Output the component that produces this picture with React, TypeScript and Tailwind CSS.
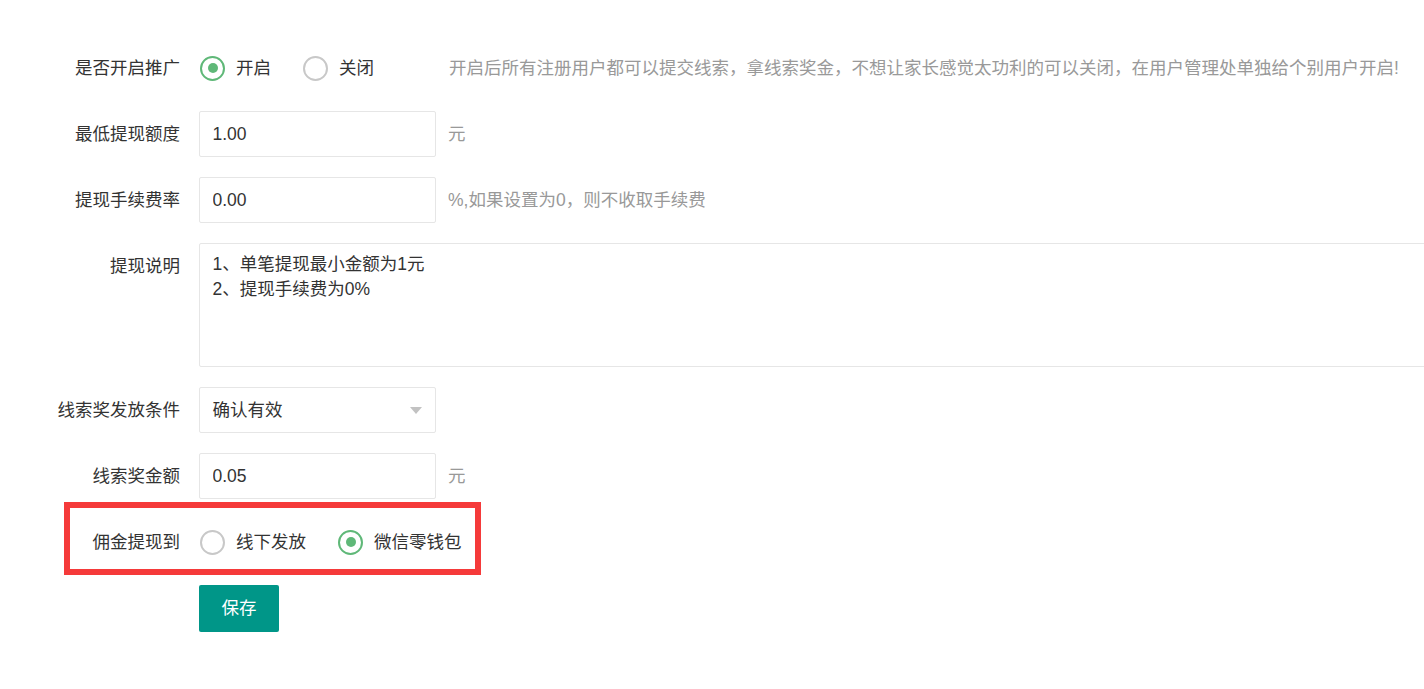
import React from "react";

const font = "font-['Liberation_Sans','Noto_Sans_CJK_SC',sans-serif]";

const Radio = ({ label, checked }: { label: string; checked?: boolean }) => (
  <div className="flex items-center mr-[31px] cursor-pointer">
    <span
      className={`ml-px w-[25px] h-[25px] rounded-full border-[2.5px] flex items-center justify-center ${
        checked ? "border-[#5FB878]" : "border-[#c8c8c8]"
      }`}
    >
      {checked && <span className="w-[10px] h-[10px] rounded-full bg-[#5FB878]" />}
    </span>
    <span className="ml-[11px]">{label}</span>
  </div>
);

const Label = ({ text }: { text: string }) => (
  <label className="w-[138px] shrink-0 flex justify-end whitespace-nowrap pr-[19px] pt-[10.5px] leading-[25px] h-fit text-[#333]">
    {text}
  </label>
);

const TextInput = ({ value }: { value: string }) => (
  <input
    defaultValue={value}
    className="h-[46px] w-[237px] border border-[#e6e6e6] rounded-[2px] px-[12.5px] text-[#333] outline-none bg-white"
  />
);

const Hint = ({ text }: { text: string }) => (
  <span className="ml-[12px] leading-[46px] text-[#999]">{text}</span>
);

export default function App() {
  return (
    <div className={`w-full h-[689px] overflow-hidden bg-white text-[17.5px] ${font}`}>
      <form className="pt-[45px] pl-[61px]" onSubmit={(e) => e.preventDefault()}>
        {/* 是否开启推广 */}
        <div className="flex mb-[20px] h-[46px]">
          <Label text="是否开启推广" />
          <div className="flex items-center text-[#333]">
            <Radio label="开启" checked />
            <div className="flex items-center cursor-pointer">
              <span className="ml-px w-[25px] h-[25px] rounded-full border-[2.5px] border-[#c8c8c8]" />
              <span className="ml-[11px]">关闭</span>
            </div>
            <span className="ml-[75px] whitespace-nowrap text-[#999]">
              开启后所有注册用户都可以提交线索，拿线索奖金，不想让家长感觉太功利的可以关闭，在用户管理处单独给个别用户开启!
            </span>
          </div>
        </div>

        {/* 最低提现额度 */}
        <div className="flex mb-[20px]">
          <Label text="最低提现额度" />
          <TextInput value="1.00" />
          <Hint text="元" />
        </div>

        {/* 提现手续费率 */}
        <div className="flex mb-[20px]">
          <Label text="提现手续费率" />
          <TextInput value="0.00" />
          <Hint text="%,如果设置为0，则不收取手续费" />
        </div>

        {/* 提现说明 */}
        <div className="flex mb-[20px]">
          <Label text="提现说明" />
          <textarea
            defaultValue={"1、单笔提现最小金额为1元\n2、提现手续费为0%"}
            className="h-[124px] w-[1300px] shrink-0 border border-[#e6e6e6] rounded-[2px] px-[12.5px] py-[7.5px] leading-[25px] text-[#333] resize-none outline-none"
          />
        </div>

        {/* 线索奖发放条件 */}
        <div className="flex mb-[20px]">
          <Label text="线索奖发放条件" />
          <div className="h-[46px] w-[237px] border border-[#e6e6e6] rounded-[2px] pl-[12.5px] pr-[13px] flex items-center justify-between text-[#333] cursor-pointer">
            <span>确认有效</span>
            <span className="w-0 h-0 border-l-[6.5px] border-r-[6.5px] border-t-[7px] border-l-transparent border-r-transparent border-t-[#c2c2c2]" />
          </div>
        </div>

        {/* 线索奖金额 */}
        <div className="flex mb-[20px]">
          <Label text="线索奖金额" />
          <TextInput value="0.05" />
          <Hint text="元" />
        </div>

        {/* 佣金提现到 */}
        <div className="relative flex mb-[20px] h-[46px]">
          <Label text="佣金提现到" />
          <div className="flex items-center text-[#333]">
            <Radio label="线下发放" />
            <Radio label="微信零钱包" checked />
          </div>
          <div className="absolute left-[3px] top-[-17px] w-[417px] h-[73px] border-[6px] border-[#f53a3a] pointer-events-none" />
        </div>

        {/* 保存 */}
        <div className="flex">
          <button
            type="submit"
            className="ml-[138px] w-[80px] h-[47px] bg-[#009688] text-white rounded-[2px]"
          >
            保存
          </button>
        </div>
      </form>
    </div>
  );
}
